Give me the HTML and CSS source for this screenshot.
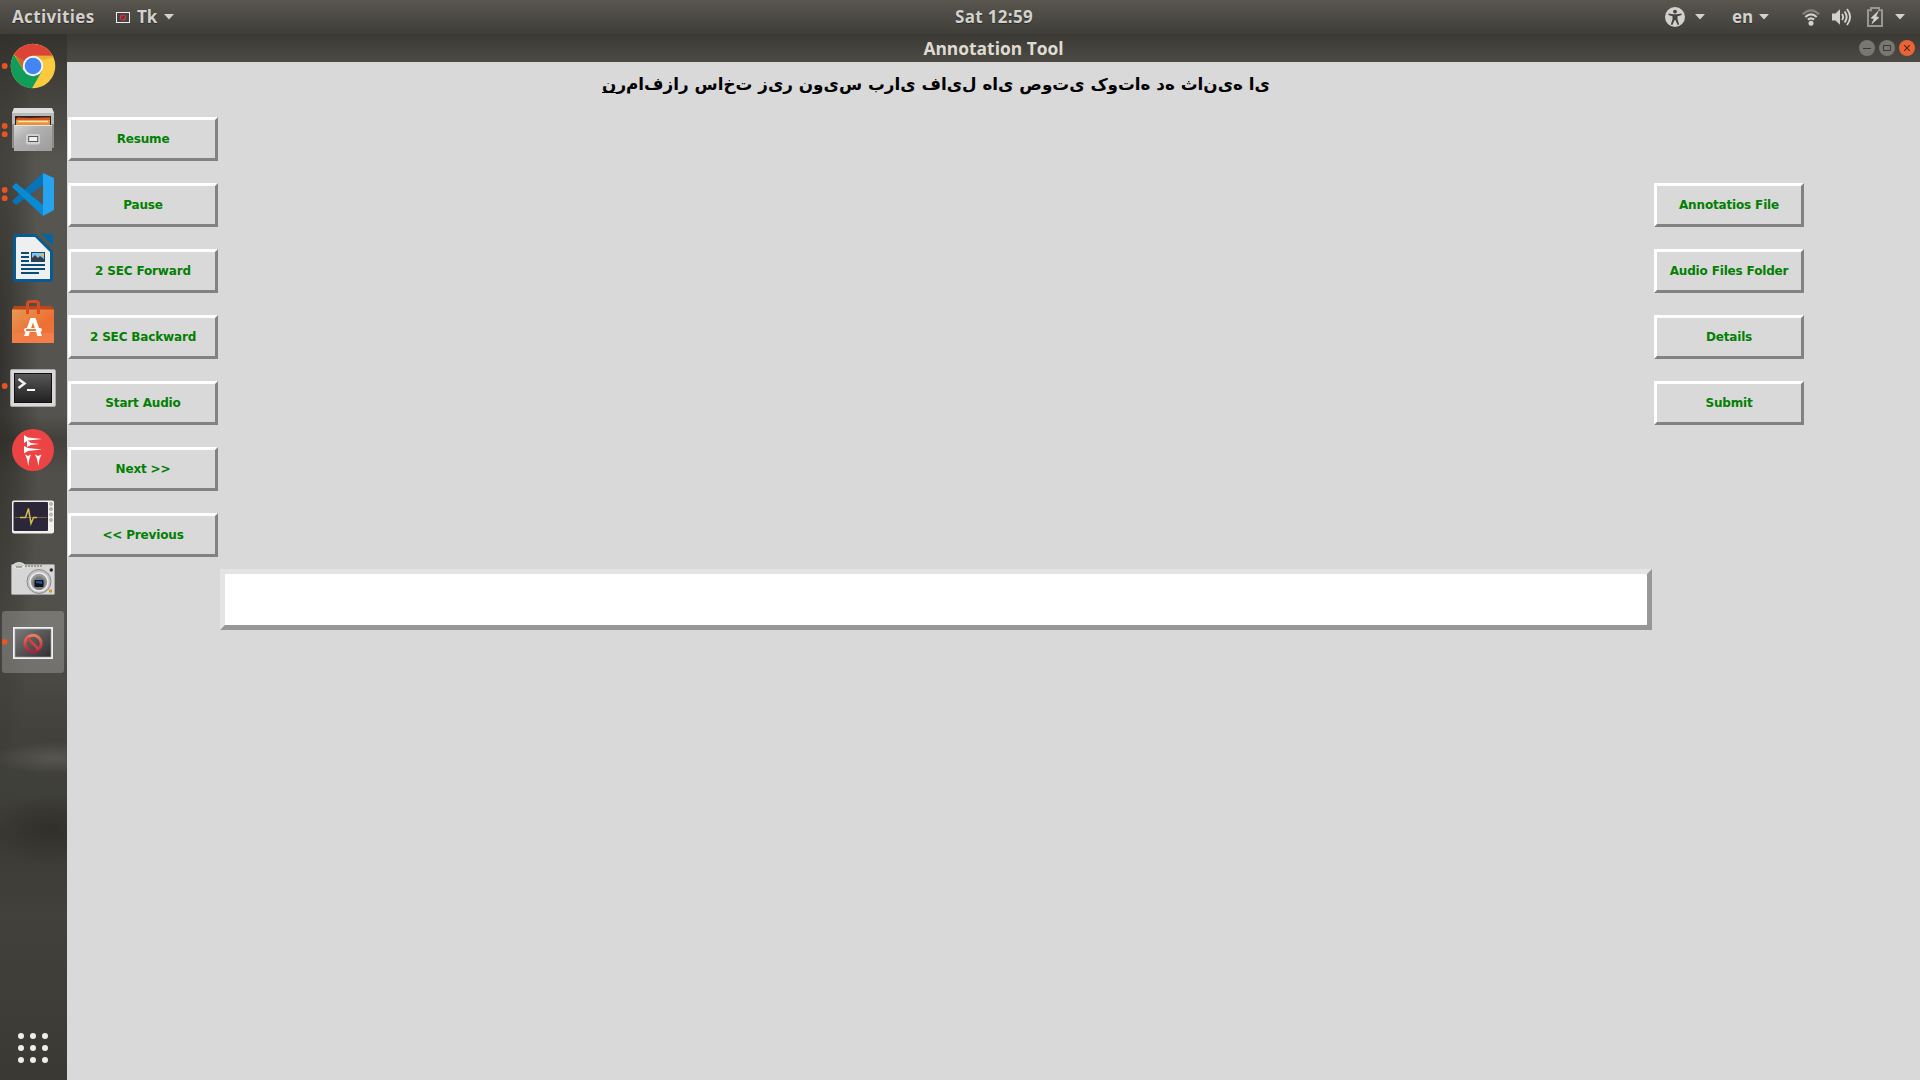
FILE: index.html
```html
<!DOCTYPE html>
<html lang="en">
<head>
<meta charset="utf-8">
<title>Annotation Tool</title>
<link rel="stylesheet" href="styles.css">
</head>
<body>
<header class="topbar">
  <div class="menus">
    <span class="activities">Activities</span>
    <svg class="app-mini" width="14" height="11" viewBox="0 0 14 11"><rect x=".5" y=".5" width="13" height="10" fill="#444" stroke="#eee"/><circle cx="7" cy="5.500" r="2.500" fill="#5c2326" stroke="#cf3d3e" stroke-width="1.200"/><path d="M5 3.500l4 4" stroke="#cf3d3e"/></svg>
    <span class="app-name">Tk</span>
    <svg class="caret" width="10" height="6" viewBox="0 0 10 6"><path d="M0 0h10L5 5.500z"/></svg>
  </div>
  <div class="clock">Sat 12:59</div>
  <div class="status">
    <svg width="20" height="20" viewBox="0 0 20 20"><circle cx="10" cy="10" r="10" fill="#d3d1cd"/><g fill="#45443e"><circle cx="10" cy="4.600" r="1.900"/><path d="M3.500 6.500l4.700.7h3.600l4.700-.7.2 1.400-4.200 1.300v3l1.700 5.200-1.500.5L10.300 13h-.6l-2.400 4.900-1.500-.5 1.700-5.200v-3L3.300 7.900z"/></g></svg>
    <svg class="caret c1" width="10" height="6" viewBox="0 0 10 6"><path d="M0 0h10L5 5.500z"/></svg>
    <span class="lang">en</span>
    <svg class="caret c2" width="10" height="6" viewBox="0 0 10 6"><path d="M0 0h10L5 5.500z"/></svg>
    <svg class="wifi" width="18" height="17" viewBox="0 0 18 17" fill="none" stroke-width="2.200"><path d="M.8 5.200Q9-2.600 17.200 5.200" stroke="#85837d"/><path d="M3.300 8Q9 2.800 14.700 8M5.900 10.700Q9 8 12.100 10.700" stroke="#d3d1cd"/><circle cx="9" cy="14.300" r="2.500" fill="#d3d1cd"/></svg>
    <svg class="volume" width="20" height="18" viewBox="0 0 20 18" fill="none" stroke="#d3d1cd" stroke-width="1.900"><path d="M0 5.500h3.500L8 1.300v15.400L3.500 12.500H0z" fill="#d3d1cd" stroke="none"/><path d="M10 6Q12.300 9 10 12M12.600 3.500Q16.800 9 12.600 14.500M15 1Q21.200 9 15 17"/></svg>
    <svg class="battery" width="16" height="20" viewBox="0 0 16 20"><path d="M1 3.300h3V1h8v2.300h3V19H1z" fill="none" stroke="#98968f" stroke-width="2"/><path d="M11 4.500L4.200 11l3 .7L5 16.500l7-6-3.300-.8z" fill="#d3d1cd" stroke="#d3d1cd" stroke-width=".8"/></svg>
    <svg class="caret c3" width="10" height="6" viewBox="0 0 10 6"><path d="M0 0h10L5 5.500z"/></svg>
  </div>
</header>
<div class="desktop">
  <nav class="dock">
    <svg class="slot" viewBox="0 0 67 64">
      <circle cx="4.700" cy="32" r="2.900" fill="#e95420"/>
      <circle cx="33" cy="32" r="22.300" fill="#fdca3e"/>
      <path d="M33 32L14 20.600A22.300 22.300 0 0 1 52.800 21.800H33z" fill="#dc4437"/>
      <path d="M33 32L23.500 36.500 14 20.500A22.300 22.300 0 0 0 32 54.300L42 37z" fill="#109d59"/>
      <path d="M33 21.800h19.800l.7 1.900L42 26z" fill="#d8a02c" opacity=".6"/>
      <path d="M14.500 20.500L22.800 35l2-8z" fill="#a52c23" opacity=".6"/>
      <circle cx="33" cy="32" r="10.200" fill="#f2f4f6"/><circle cx="33" cy="32" r="8.300" fill="#4285f4"/>
    </svg>
    <svg class="slot" viewBox="0 0 67 64">
      <defs><linearGradient id="cab" x2="1" y2="1"><stop stop-color="#d5d5d5"/><stop offset=".35" stop-color="#b2b2b2"/><stop offset="1" stop-color="#9b9b9b"/></linearGradient></defs>
      <g fill="#e95420"><circle cx="4.700" cy="28" r="2.900"/><circle cx="4.700" cy="36.200" r="2.900"/></g>
      <path d="M14 10h38l2 5v35H12V15z" fill="#8d8d8d"/><path d="M14 10h38l2 5H12z" fill="#dedede"/><path d="M12 15h42v11H12z" fill="#b9b9b9"/>
      <path d="M15 18h36v9H15z" fill="#292522"/><path d="M18 19.500l12 .5 20-.8V27H16v-6z" fill="#d4541c"/><path d="M16 22h34v5H16z" fill="#e8923a"/><path d="M18 23.500h30" stroke="#fae0b2" stroke-width="1.500"/>
      <path d="M14 27h38v26H14z" fill="url(#cab)"/><path d="M14 27.500h38" stroke="#e4e4e4"/>
      <rect x="26" y="36" width="14" height="10.500" rx="2" fill="#d0d0d0"/><rect x="28.700" y="38.500" width="9" height="5" fill="#efefef" stroke="#555"/>
    </svg>
    <svg class="slot" viewBox="0 0 67 64">
      <g fill="#e95420"><circle cx="4.700" cy="28" r="2.900"/><circle cx="4.700" cy="36.200" r="2.900"/></g>
      <path d="M12 39l4 4 27-20V11z" fill="#0873b8"/><path d="M12 25l4-4 27 22v11z" fill="#078bd3"/><path d="M43 11l11 5v32l-11 6z" fill="#26a3ef"/>
    </svg>
    <svg class="slot" viewBox="0 0 67 64">
      <path d="M16 8h20l17 17v28q0 3-3 3H16q-3 0-3-3V11q0-3 3-3z" fill="#075b91"/><path d="M17 11h18l15 15v27H16V12z" fill="#eeefef"/><path d="M41 8h10q2 0 2 2v10z" fill="#0565a0"/>
      <path d="M21 27h8M21 31h8M21 35h8M21 39h24M21 43h24M21 47h18" stroke="#0b4c77" stroke-width="2"/>
      <rect x="31" y="26" width="14" height="10" fill="#0b4c77"/><path d="M32 27h12v8H32z" fill="#83c2eb"/><path d="M32 35v-3l3-3 3 3 2-2 4 3v2z" fill="#3a3e42"/><circle cx="42.500" cy="28.500" r="1.500" fill="#e6bd47"/>
    </svg>
    <svg class="slot" viewBox="0 0 67 64">
      <defs><linearGradient id="bag" x2="1" y2="1"><stop stop-color="#e79956"/><stop offset=".6" stop-color="#ee6e32"/><stop offset="1" stop-color="#ef7a45"/></linearGradient></defs>
      <path d="M14 16h38l2 4H12z" fill="#bd451b"/><path d="M12 19.500h42V53H12z" fill="url(#bag)"/><path d="M12 43h42v10H12z" fill="#f48451" opacity=".6"/>
      <path d="M27.500 24V14q0-2.500 3-2.500h5q3 0 3 2.500v10" fill="none" stroke="#d94c1d" stroke-width="3"/>
      <path d="M30.500 28h5l6.500 18h-4.500L33 32.500 28.500 46H24z" fill="#fff"/><rect x="24" y="38" width="18" height="4" rx="2" fill="#fff"/><path d="M26 40h10" stroke="#e96a29" stroke-width="1.800"/>
    </svg>
    <svg class="slot" viewBox="0 0 67 64">
      <defs><linearGradient id="term" x2="0" y2="1"><stop stop-color="#575757"/><stop offset="1" stop-color="#212121"/></linearGradient></defs>
      <circle cx="4.700" cy="32" r="2.900" fill="#e95420"/>
      <rect x="10.500" y="15.500" width="45" height="37" rx="1.500" fill="#d8d8d8" stroke="#aaa"/><rect x="14" y="19" width="38" height="30" fill="#111"/><rect x="15" y="20" width="36" height="28" fill="url(#term)"/>
      <path d="M18.500 25l6 4.500-6 4.500" fill="none" stroke="#f1f1f1" stroke-width="2.500"/><path d="M27 36h8" stroke="#fff" stroke-width="2"/>
    </svg>
    <svg class="slot" viewBox="0 0 67 64">
      <circle cx="33" cy="32" r="21" fill="#ec4444"/>
      <path d="M24 17l4 2.500 14 1.500-14 1.500L24 25zM24 28l4 2 14 1.500-14 1.500-4 2.500zM27 22l4 3 8 1-8 1-4 2zM25 36.500l3 1.500 3-1.500-1.700 4.500-1 7-1.300-7zM35 36.500l3 1.500 3.500-1.500-2 4.500-1 7-1.500-7z" fill="#fff"/>
    </svg>
    <svg class="slot" viewBox="0 0 67 64">
      <rect x="12" y="18.500" width="42" height="33" rx="2" fill="#f2f1ee"/><rect x="13.500" y="20" width="34.500" height="29" rx="1" fill="#2b2638"/>
      <path d="M15 35.500h32" stroke="#71633e"/><path d="M20 35.500h5.500l3-9 2.500 15 2.500-6H37" fill="none" stroke="#d2bd56" stroke-width="1.500"/>
      <g fill="#c8c8c4" stroke="#929290" stroke-width=".7"><circle cx="51" cy="22" r="1.500"/><circle cx="51" cy="27" r="1.500"/><circle cx="51" cy="32.500" r="1.500"/><circle cx="51" cy="38" r="1.500"/></g>
    </svg>
    <svg class="slot" viewBox="0 0 67 64">
      <rect x="11.500" y="18.500" width="43" height="30" rx="1" fill="#d6d6d6" stroke="#a0a0a0"/><path d="M25 20h18" stroke="#888" stroke-width="1.500" stroke-dasharray="2 1"/><ellipse cx="19" cy="19.500" rx="5.500" ry="2.800" fill="#ccc" stroke="#eee"/><path d="M16 21h6" stroke="#777"/>
      <circle cx="39" cy="35.500" r="12" fill="#c2c2c2" stroke="#8b8b8b"/><circle cx="39" cy="36" r="9" fill="#999" stroke="#eee" stroke-width="1.500"/><circle cx="39" cy="37" r="6.500" fill="#77797b" stroke="#888"/><rect x="34.500" y="34" width="9" height="7" rx="1" fill="#101218"/><path d="M36 35h6v3l-6-1z" fill="#23509b"/>
      <circle cx="51.300" cy="24" r="1.700" fill="#222"/><path d="M49 43.500h3v3h-3z" fill="#dc971d"/>
    </svg>
    <svg class="slot" viewBox="0 0 67 64">
      <defs><linearGradient id="scr" x2="1" y2="1"><stop stop-color="#7a7a7a"/><stop offset="1" stop-color="#303030"/></linearGradient><linearGradient id="ban" x2="0" y2="1"><stop stop-color="#f07b5b"/><stop offset="1" stop-color="#b51b3a"/></linearGradient></defs>
      <rect x="2" y="1" width="62" height="62" rx="3" fill="#fff" opacity=".22"/>
      <circle cx="4.700" cy="32" r="2.900" fill="#e95420"/>
      <rect x="13" y="17" width="40" height="32" fill="#f1f1f1"/><rect x="15" y="19" width="36" height="28" fill="url(#scr)" stroke="#999" stroke-width=".7"/>
      <circle cx="33" cy="33.500" r="8.200" fill="none" stroke="url(#ban)" stroke-width="3"/><path d="M27.500 28l11 11" stroke="#d23f41" stroke-width="2.800"/>
    </svg>
    <svg class="launcher" viewBox="0 0 67 64" fill="#eeeeec"><circle cx="21" cy="20" r="3"/><circle cx="33" cy="20" r="3"/><circle cx="45" cy="20" r="3"/><circle cx="21" cy="32" r="3"/><circle cx="33" cy="32" r="3"/><circle cx="45" cy="32" r="3"/><circle cx="21" cy="44" r="3"/><circle cx="33" cy="44" r="3"/><circle cx="45" cy="44" r="3"/></svg>
  </nav>
  <main class="window">
    <div class="titlebar">
      <span class="title">Annotation Tool</span>
      <div class="controls">
        <svg width="16" height="16" viewBox="0 0 16 16"><circle cx="8" cy="8" r="8" fill="#787770"/><path d="M4 8.500h8" stroke="#3a3934"/></svg>
        <svg width="16" height="16" viewBox="0 0 16 16"><circle cx="8" cy="8" r="8" fill="#787770"/><path d="M4.500 5.500h7v5h-7z" fill="none" stroke="#3a3934"/></svg>
        <svg width="16" height="16" viewBox="0 0 16 16"><circle cx="8" cy="8" r="8" fill="#ed6335"/><path d="M5.200 5.200l5.600 5.600M10.800 5.200l-5.600 5.600" stroke="#4b2a1b" stroke-width="1.200"/></svg>
      </div>
    </div>
    <div class="content">
      <div class="column left">
        <button class="btn">Resume</button>
        <button class="btn">Pause</button>
        <button class="btn">2 SEC Forward</button>
        <button class="btn">2 SEC Backward</button>
        <button class="btn">Start Audio</button>
        <button class="btn">Next &gt;&gt;</button>
        <button class="btn">&lt;&lt; Previous</button>
      </div>
      <div class="center">
        <div class="heading" lang="fa"><span class="mnemonic">ن</span>رمافزار ساخت زیر نویس برای فایل های صوتی کوتاه ده ثانیه ای</div>
        <input class="entry" type="text" aria-label="Annotation">
      </div>
      <div class="column right">
        <button class="btn">Annotatios File</button>
        <button class="btn">Audio Files Folder</button>
        <button class="btn">Details</button>
        <button class="btn">Submit</button>
      </div>
    </div>
  </main>
</div>
</body>
</html>
```
FILE: styles.css
```css
* { box-sizing: border-box; }
body {
  margin: 0;
  width: 1920px;
  height: 1080px;
  overflow: hidden;
  display: flex;
  flex-direction: column;
  background: #d9d9d9;
  font-family: "DejaVu Sans", sans-serif;
}
svg { display: block; flex: none; }

.topbar {
  height: 34px;
  flex: none;
  display: grid;
  grid-template-columns: 934px 120px 1fr;
  align-items: center;
  padding-right: 15px;
  background: linear-gradient(#59564e, #3f3e39);
  color: #d3d1cd;
  font: 700 17px/34px "Open Sans", "Noto Sans", sans-serif;
  text-shadow: 0 1px 1px #2a2926;
}
.menus, .status { display: flex; align-items: center; }
.menus { padding-left: 12px; }
.activities { width: 83px; white-space: nowrap; letter-spacing: .35px; }
.app-mini { margin-left: 21px; }
.app-name { width: 21px; margin-left: 7px; }
.menus .caret { margin-left: 6px; }
.caret { fill: #d3d1cd; }
.clock { text-align: center; white-space: nowrap; letter-spacing: .3px; }
.status { justify-content: flex-end; }
.c1 { margin-left: 10px; }
.lang { width: 22px; margin-left: 27px; }
.c2 { margin-left: 5px; }
.wifi { margin-left: 33px; }
.volume { margin-left: 12px; }
.battery { margin-left: 15px; }
.c3 { margin-left: 12px; }

.desktop { flex: 1; min-height: 0; display: flex; }
.dock {
  width: 67px;
  flex: none;
  display: flex;
  flex-direction: column;
  background:
    radial-gradient(ellipse 60px 16px at 54px 724px, #575652, transparent),
    radial-gradient(ellipse 60px 35px at 50px 795px, #31302b, transparent),
    radial-gradient(ellipse 40px 420px at 0 330px, rgba(36, 35, 31, .7), transparent),
    linear-gradient(#34332f 0, #474641 70px, #565550 130px, #555450 380px, #42413c 405px, #504f4a 440px, #51504b 590px, #42413c 700px, #40403a 760px, #3a3934 800px, #42413c 880px, #3a3934 1046px);
}
.slot, .launcher { width: 67px; height: 64px; }
.launcher { margin-top: auto; }

.window { flex: 1; min-width: 0; display: flex; flex-direction: column; }
.titlebar {
  height: 28px;
  flex: none;
  display: grid;
  grid-template-columns: 1fr 160px 1fr;
  grid-template-rows: 28px;
  align-items: center;
  padding: 0 5px;
  background: linear-gradient(#3a3934, #4c4b45);
  color: #dfdbd2;
}
.title {
  grid-column: 2;
  text-align: center;
  white-space: nowrap;
  font: 700 17.4px/28px "Open Sans", "Noto Sans", sans-serif;
}
.controls { display: flex; justify-content: flex-end; gap: 4px; }

.content {
  flex: 1;
  display: grid;
  grid-template-columns: 150px 1432px 150px;
  column-gap: 2px;
  padding-left: 1px;
  align-items: start;
}
.column { display: flex; flex-direction: column; gap: 22px; }
.left { padding-top: 55px; }
.right { padding-top: 121px; }
.btn {
  width: 150px;
  height: 44px;
  padding: 0;
  border: 3px solid;
  border-color: #fff #828282 #828282 #fff;
  border-radius: 0;
  background: #d9d9d9;
  color: #008000;
  font: bold 12px "DejaVu Sans", sans-serif;
  letter-spacing: -.16px;
}
.center { display: flex; flex-direction: column; }
.heading {
  height: 44px;
  margin-bottom: 463px;
  line-height: 45px;
  text-align: center;
  white-space: nowrap;
  color: #000;
  font-size: 16.8px;
  font-weight: bold;
  direction: ltr;
  unicode-bidi: bidi-override;
  /* letters run left to right in their unjoined forms */
  font-feature-settings: "init" 0, "medi" 0, "fina" 0, "rlig" 0, "liga" 0;
}
.mnemonic {
  text-decoration: underline 1px;
  text-decoration-skip-ink: none;
  text-underline-offset: 2px;
}
.entry {
  height: 61px;
  width: 100%;
  border: 5px solid;
  border-color: #e4e4e4 #979797 #979797 #e4e4e4;
  border-radius: 0;
  background: #fff;
  outline: none;
}
```
